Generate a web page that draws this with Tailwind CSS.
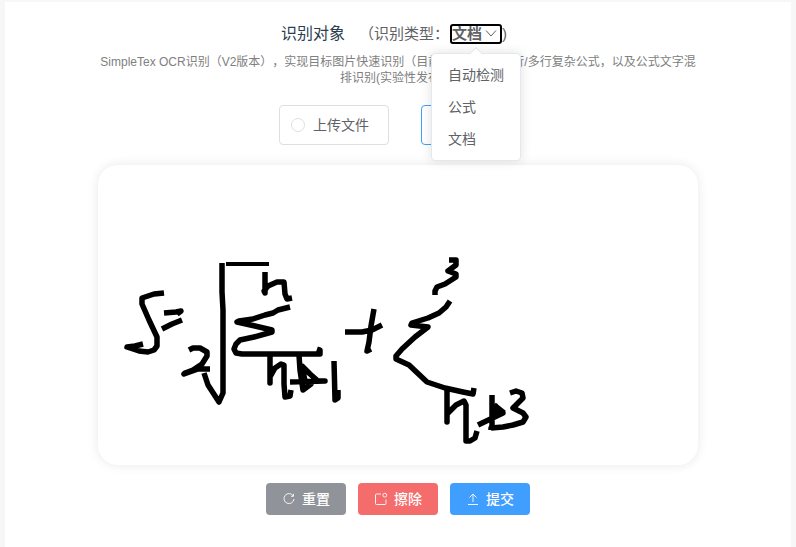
<!DOCTYPE html>
<html lang="zh-CN">

<head>
  <meta charset="UTF-8">
  <meta name="viewport" content="width=device-width, initial-scale=1.0">
  <title>SimpleTex OCR识别</title>
  <script src="https://cdn.jsdelivr.net/npm/@tailwindcss/browser@4"></script>
</head>

<body class="bg-[#f7f7f7] font-['Liberation_Sans','Noto_Sans_CJK_SC',sans-serif] text-sm text-[#606266] [text-spacing-trim:space-all]">
  <main class="mx-[5px] mt-0.5 flex min-h-screen flex-col items-center bg-white px-4 pt-5">

    <!-- title and recognition type -->
    <header class="mr-2 flex h-6 items-center">
      <h1 class="mr-3.5 text-base text-[#2c3e50]">识别对象</h1>
      <span class="text-[15px]">（识别类型：</span>
      <div class="relative ml-px">
        <button type="button" id="type" aria-haspopup="menu" aria-expanded="true" class="flex h-5 items-center gap-0.5 rounded-[3px] border-2 border-black pr-0.5 text-[15px] font-bold outline-none">
          <span id="type-text">文档</span>
          <svg class="h-3.5 w-3.5" viewBox="0 0 14 14" fill="none" stroke="currentColor" aria-hidden="true"><path d="M2 3.5l5 5.5L12 3.5" /></svg>
        </button>
        <div id="menu" class="absolute top-[29px] left-1/2 z-10 w-[90px] -translate-x-1/2 rounded border border-[#e4e7ed] bg-white py-[5px] shadow-[0_0_12px_rgba(0,0,0,0.12)]">
          <span class="absolute -top-[5px] left-1/2 h-2.5 w-2.5 -translate-x-1/2 rotate-45 border-t border-l border-[#e4e7ed] bg-white"></span>
          <ul role="menu" class="relative">
            <li role="none"><button role="menuitem" type="button" class="h-8 w-full px-4 text-left">自动检测</button></li>
            <li role="none"><button role="menuitem" type="button" class="h-8 w-full px-4 text-left">公式</button></li>
            <li role="none"><button role="menuitem" type="button" class="h-8 w-full px-4 text-left">文档</button></li>
          </ul>
        </div>
      </div>
      <span class="text-[15px]">)</span>
    </header>

    <p class="mt-2 w-full max-w-[600px] text-center text-xs leading-4 text-[#808080]">SimpleTex OCR识别（V2版本），实现目标图片快速识别（目前已支持识别单行/多行复杂公式，以及公式文字混排识别(实验性发布)。</p>

    <!-- input source -->
    <div class="mt-[19px] flex gap-8">
      <label class="flex h-10 items-center gap-2 rounded border border-[#dcdfe6] pr-[19px] pl-[11px]">
        <input type="radio" name="source" value="file" class="h-3.5 w-3.5 appearance-none rounded-full border border-[#dcdfe6] checked:border-4 checked:border-[#409eff]">
        上传文件
      </label>
      <label class="flex h-10 items-center gap-2 rounded border border-[#409eff] pr-[19px] pl-[11px] text-[#409eff]">
        <input type="radio" name="source" value="board" checked class="h-3.5 w-3.5 appearance-none rounded-full border border-[#dcdfe6] checked:border-4 checked:border-[#409eff]">
        手写板
      </label>
    </div>

    <!-- handwriting board -->
    <div class="mt-5 w-full max-w-[600px] rounded-[20px] bg-white shadow-[0_0_12px_rgba(0,0,0,0.09)]">
      <svg class="block w-full" viewBox="98 165 600 300" fill="none" stroke="#000" stroke-width="5.5" stroke-linejoin="round" role="img" aria-label="手写公式">
        <!-- S = -->
        <path d="M164 293L154 294L142 298L142 304L149 320L157 337V346L154 350L148 352L139 351L130 348L127 347L135 346L143 344" />
        <path d="M164 313L176 312L181 311L177 314M182 320L172 324L162 329" />
        <!-- root -->
        <path d="M189 350L193 348H200L207 352V356L202 364L193 370L185 373L184 374L198 369L210 369" />
        <path d="M204 373L208 385L219 402L223 393V350V310L222 292V263" />
        <path d="M228 264H267" stroke-linecap="square" stroke-width="4" />
        <!-- upper n -->
        <path d="M265 272V293L264 291L268 286L277 282H284L285 294L287 299L292 298" />
        <!-- first sum -->
        <path d="M290 307L278 310L273 313L265 315L253 319L239 321L237 322L255 326L272 330V332L254 337L240 340L236 344L234 349L236 353L242 354H320V350L317 349" />
        <path d="M270 354V383L270 377L275 368L281 364L284 365V384L285 397L290 396L291 390" />
        <path d="M299 355L300 370L303 390L311 384L305 381L302 366L310 374L318 381H325L290 382" />
        <path d="M334 361L335 400L338 398V390" />
        <!-- plus -->
        <path d="M345 332H362L372 330L382 325M374 309L371 326L369 342L367 351L371 349" />
        <!-- second sum -->
        <path d="M449 260L456 260V265L448 271L456 274V277L445 284L437 287L435 291V295" />
        <path d="M450 301L446 307L439 313L428 318L412 323L411 325L428 327L415 337L402 349L396 356V359L409 365L427 382L445 388L463 392L473 394L474 388" />
        <path d="M447 390V422V414L456 405L464 401L466 405V441H470L475 438L477 431" />
        <path d="M492 395V426M495 404L496 412L503 413L478 425M494 405L504 413" />
        <path d="M510 393L516 391L522 393L523 398L513 408L523 413L526 417L523 422L513 425L503 427L491 428V430" />
      </svg>
    </div>

    <div class="mt-[18px] flex gap-3 text-white">
      <button type="button" class="flex h-8 w-20 items-center justify-center gap-1.5 rounded bg-[#909399] font-medium">
        <svg class="h-3.5 w-3.5 opacity-90" viewBox="0 0 14 14" fill="none" stroke="currentColor" aria-hidden="true"><path d="M11.3 4A5 5 0 1 0 12 7M11.5 1.8v2.5H9" /></svg>
        重置
      </button>
      <button type="button" class="flex h-8 w-20 items-center justify-center gap-1.5 rounded bg-[#f56c6c] font-medium">
        <svg class="h-3.5 w-3.5 opacity-90" viewBox="0 0 14 14" fill="none" stroke="currentColor" aria-hidden="true"><path d="M7 2H2.5Q1.5 2 1.5 3v8.500q0 1 1 1h8.500q1 0 1-1V7.500" /><circle cx="10.8" cy="3.2" r="1.900" /></svg>
        擦除
      </button>
      <button type="button" class="flex h-8 w-20 items-center justify-center gap-1.5 rounded bg-[#409eff] font-medium">
        <svg class="h-3.5 w-3.5 opacity-90" viewBox="0 0 14 14" fill="none" stroke="currentColor" aria-hidden="true"><path d="M7 10V2M3.5 5.5L7 2l3.5 3.5M2 12.5h10" /></svg>
        提交
      </button>
    </div>
  </main>
</body>

<script>
  const type = document.querySelector("#type")
  const menu = document.querySelector("#menu")

  type.addEventListener('click', () => {
    const hidden = menu.classList.toggle('hidden')
    type.setAttribute('aria-expanded', String(!hidden))
  })

  menu.addEventListener('click', e => {
    if (e.target.tagName !== 'BUTTON') return
    document.querySelector("#type-text").textContent = e.target.textContent
    menu.classList.add('hidden')
    type.setAttribute('aria-expanded', 'false')
  })
</script>

</html>
